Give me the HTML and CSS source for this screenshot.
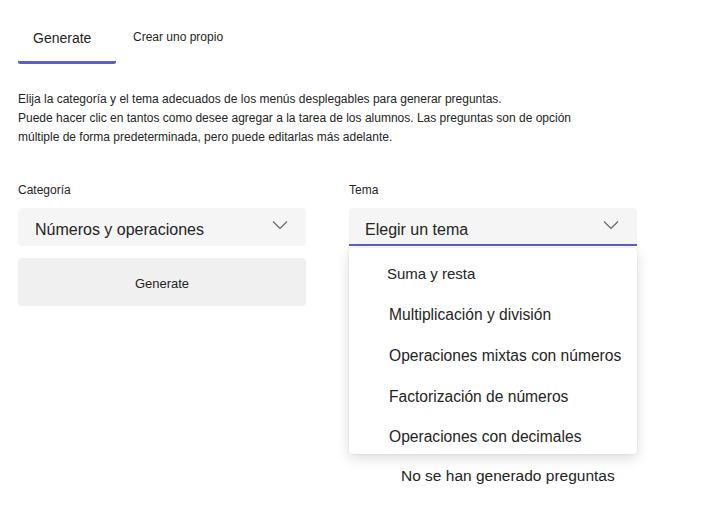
FILE: index.html
```html
<!DOCTYPE html>
<html>
<head>
<meta charset="utf-8">
<title>Generate</title>
<link rel="stylesheet" href="styles.css">
</head>
<body>
  <div class="tabs">
    <div class="tab active">Generate</div>
    <div class="tab">Crear uno propio</div>
  </div>

  <p class="intro">Elija la categoría y el tema adecuados de los menús desplegables para generar preguntas.<br>
  Puede hacer clic en tantos como desee agregar a la tarea de los alumnos. Las preguntas son de opción<br>
  múltiple de forma predeterminada, pero puede editarlas más adelante.</p>

  <div class="columns">
    <div class="col">
      <div class="label">Categoría</div>
      <div class="select">
        <span>Números y operaciones</span>
        <svg class="chev" width="16" height="10" viewBox="0 0 16 10"><path d="M1 1.5 L8 8.5 L15 1.5" fill="none" stroke="#616161" stroke-width="1.1"/></svg>
      </div>
      <div class="button">Generate</div>
    </div>
    <div class="col">
      <div class="label">Tema</div>
      <div class="select open">
        <span>Elegir un tema</span>
        <svg class="chev" width="16" height="10" viewBox="0 0 16 10"><path d="M1 1.5 L8 8.5 L15 1.5" fill="none" stroke="#616161" stroke-width="1.1"/></svg>
        <ul class="menu">
          <li class="shift">Suma y resta</li>
          <li>Multiplicación y división</li>
          <li>Operaciones mixtas con números</li>
          <li>Factorización de números</li>
          <li>Operaciones con decimales</li>
        </ul>
      </div>
      <div class="empty">No se han generado preguntas</div>
    </div>
  </div>
</body>
</html>
```

FILE: styles.css
```css
body {
  margin:0;
  padding:0 18px;
  font-family:'Liberation Sans', Arial, sans-serif;
  color:#242424;
  background:#fff;
}

.tabs {
  display:flex;
  margin-top:26px;
}

.tab {
  font-size:14px;
  line-height:24px;
  padding:0 0 11px;
}

.tab.active {
  width:98px;
  padding-left:15px;
  box-sizing:border-box;
  border-bottom:3px solid #5b5fc7;
  border-radius:0 0 2px 2px;
  margin-right:17px;
}

.tab:not(.active) {
  font-size:12px;
  line-height:22px;
}

.intro {
  margin:26px 0 0;
  font-size:12px;
  line-height:19px;
}

.columns {
  display:flex;
  gap:43px;
  margin-top:35px;
}

.col {
  width:288px;
  position:relative;
}

.label {
  font-size:12px;
  line-height:16px;
  margin-bottom:10px;
}

.select {
  position:relative;
  height:38px;
  background:#f5f5f5;
  border-radius:4px;
  display:flex;
  align-items:center;
  justify-content:space-between;
  padding:6px 17px 0;
  box-sizing:border-box;
  font-size:16px;
}

.select.open {
  border-bottom:2px solid #5b5fc7;
  border-radius:4px 4px 0 0;
  padding:7px 17px 0 16px;
}

.chev {
  margin-top:-10px;
  margin-right:1px;
}

.button {
  margin-top:12px;
  height:48px;
  padding-top:2px;
  box-sizing:border-box;
  background:#f0f0f0;
  border-radius:4px;
  display:flex;
  align-items:center;
  justify-content:center;
  font-size:13px;
}

.menu {
  position:absolute;
  top:40px;
  left:0;
  width:288px;
  margin:0;
  padding:5px 0 0;
  list-style:none;
  background:#fff;
  border-radius:4px;
  box-shadow:0 4px 14px rgba(0,0,0,0.14), 0 0 3px rgba(0,0,0,0.08);
  z-index:2;
}

.menu li {
  height:41px;
  line-height:41px;
  padding-left:40px;
  font-size:15.6px;
}

.menu li:last-child {
  height:37px;
  line-height:39px;
}

.menu li.shift {
  padding-left:38px;
  font-size:15px;
}

.empty {
  margin-top:221px;
  padding-left:52px;
  font-size:15.5px;
}
```
